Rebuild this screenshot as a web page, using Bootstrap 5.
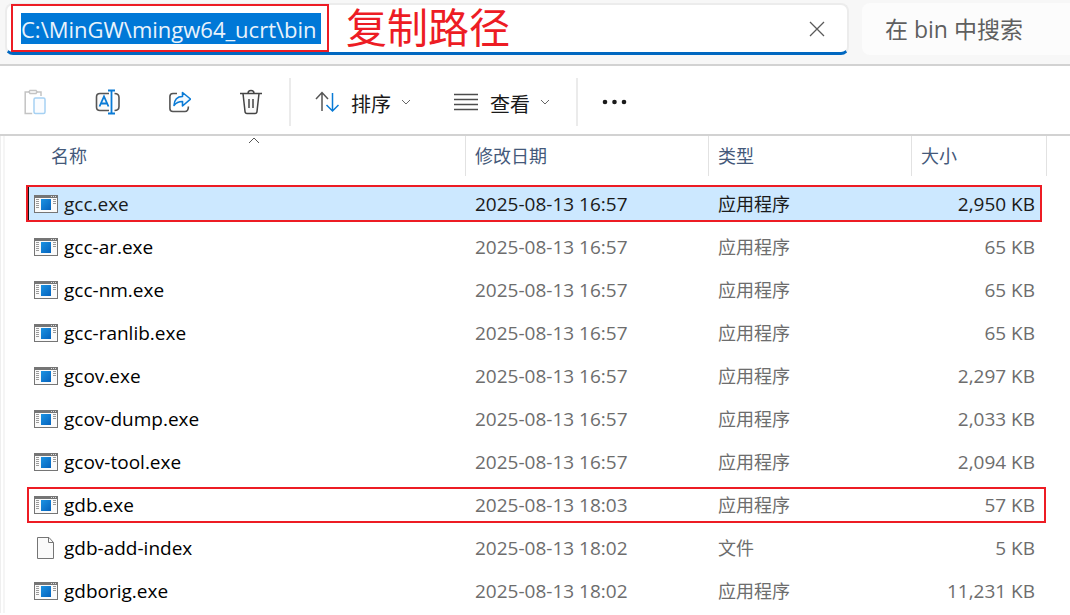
<!DOCTYPE html>
<html lang="zh-CN">
<head>
<meta charset="utf-8">
<meta name="viewport" content="width=device-width, initial-scale=1">
<title>bin</title>
<link href="https://cdn.jsdelivr.net/npm/bootstrap@5.3.0/dist/css/bootstrap.min.css" rel="stylesheet">
<style>
  :root { --note: #ed1c24; --line: #d2d2d2; --accent: #0067c0; }
  body { font-family: "Open Sans", "Noto Sans CJK SC", sans-serif; font-size: 20px; line-height: 24px; color: #000; background: #fff; }
  .top-strip { background: #f7f7f7; border-bottom: 2px solid var(--line); padding: 3px 0 9px 5px; gap: 13px; }
  .address { height: 52px; background: #fff; border: 2px solid #ececec; border-bottom: 3px solid var(--accent); border-radius: 8px; padding-right: 20px; }
  .path-note { border: 2px solid var(--note); padding: 7px 6px 7px 8px; margin-left: 4px; height: 48px; margin-top: -1px; }
  .path-input { width: 300px; height: 31px; border: 0; padding: 0; background: #0078d7; color: #e9f3fc; font-size: 22px; line-height: 30px; outline: 0; }
  .note-text { color: var(--note); font-size: 41px; line-height: 44px; margin-left: 17px; }
  .search-box { width: 208px; height: 52px; border: 0; border-radius: 8px 0 0 8px; background: #fcfcfc; color: #5c5c5c; padding: 0 0 0 23px; font-size: 23px; outline: 0; }
  .search-box::placeholder { color: #5f5f5f; opacity: 1; }
  .tools { height: 70px; border-bottom: 2px solid var(--line); padding: 4px 0 0 23px; }
  .tool { border: 0; background: none; padding: 0; color: #1a1a1a; line-height: 24px; }
  .tool svg, .close-btn svg { display: block; }
  .tool-set { gap: 48px; }
  .tool-label { margin: 6px 10px 0 12px; }
  .view-tool { margin-left: 43px; }
  .tool-rule { width: 2px; height: 48px; background: #ebebeb; margin: 0 24px 0 26px; }
  .files-pane { border-left: 1px solid #efefef; padding: 0 23px 0 2px; }
  .files-inner { border-left: 2px solid #f5f5f5; padding-left: 21px; }
  .files { table-layout: fixed; width: 100%; border-collapse: collapse; }
  .files th { padding: 0 0 7px; font-weight: 400; font-size: 18px; color: #44597a; }
  .head-cell { height: 40px; border-right: 1px solid #e2e2e2; padding-left: 9px; line-height: 40px; }
  .first-head { margin-left: 16px; }
  .sort-mark { position: absolute; top: 1px; left: 50%; transform: translateX(-50%); }
  .files tbody tr { position: relative; height: 43px; }
  .files td { padding: 0 0 2px 9px; font-size: 19px; color: #6d6d6d; white-space: nowrap; }
  .files td.name { color: #000; padding-left: 8px; }
  .files td.name > div { gap: 6px; }
  .files td.kind { font-size: 18px; }
  .files td.size { padding: 0 12px 2px 0; text-align: right; }
  .files tr.picked td { color: #1a1a1a; }
  .picked .name::before, .boxed .name::before { content: ""; position: absolute; z-index: -1; border: 2px solid var(--note); }
  .picked .name::before { inset: 2px 5px 4px 0; background: #cce8ff; box-shadow: inset 1px 0 #111; }
  .boxed .name::before { inset: 3px 1px 4px 1px; }
  .file-icon { width: 24px; flex: none; }
</style>
</head>
<body>
<svg class="d-none" aria-hidden="true">
  <symbol id="exe" viewBox="0 0 24 18">
    <rect width="24" height="18" fill="#757575"/>
    <path fill="#fafafa" d="M1 3h22v14H1z"/>
    <path stroke="#ddd" stroke-dasharray="1 1" d="M17 1.500h6"/>
    <rect x="7" y="4" width="10" height="11" fill="url(#blue)"/>
    <path stroke="#9a9a9a" d="M2 4.500h3M2 6.500h3M2 8.500h3M2 10.500h3M2 12.500h3M19 4.500h3M19 6.500h3M19 8.500h3"/>
  </symbol>
  <symbol id="doc" viewBox="0 0 24 22">
    <path d="M3.500.500h11.500l4.500 5v16h-16z" fill="#fafafa" stroke="#757575"/>
    <path d="M14.500.500v5h5" fill="none" stroke="#757575"/>
  </symbol>
  <symbol id="chev" viewBox="0 0 10 6"><path d="M1 1l4 4 4-4" fill="none" stroke="#666"/></symbol>
</svg>
<svg width="0" height="0" class="position-absolute" aria-hidden="true"><defs><linearGradient id="blue" x2="1" y2="1"><stop stop-color="#1c93e2"/><stop offset="1" stop-color="#0562bd"/></linearGradient></defs></svg>

<header class="top-strip d-flex">
  <div class="address d-flex align-items-start flex-grow-1">
    <div class="path-note d-flex"><input class="path-input" type="text" aria-label="路径" value="C:\MinGW\mingw64_ucrt\bin" spellcheck="false"></div>
    <span class="note-text text-nowrap">复制路径</span>
    <button class="tool close-btn ms-auto align-self-center" type="button" aria-label="清除">
      <svg width="20" height="20" viewBox="0 0 20 20"><path d="M3 3l14 14M17 3L3 17" stroke="#5a5a5a" stroke-width="1.300"/></svg>
    </button>
  </div>
  <input class="search-box" type="search" aria-label="搜索" placeholder="在 bin 中搜索">
</header>

<nav class="tools d-flex align-items-center" aria-label="工具栏">
  <div class="tool-set d-flex">
    <button class="tool" type="button" aria-label="粘贴" disabled>
      <svg width="24" height="26" viewBox="0 0 24 26" fill="none" stroke-width="1.500">
        <path d="M6 3H2.200v21.500h7M14 3h4v4" stroke="#c4c4c4"/><path d="M7 1.500h6l1 1.300-1 1.700H7L6 2.800z" fill="#fff" stroke="#c4c4c4"/>
        <rect x="11" y="9" width="11" height="15.500" rx="1.500" fill="#fafcff" stroke="#a6d1f3"/>
      </svg>
    </button>
    <button class="tool" type="button" aria-label="重命名">
      <svg width="26" height="26" viewBox="0 0 26 26" fill="none" stroke-width="1.600">
        <path d="M14 4.500H5Q1.500 4.500 1.500 8v10q0 3.500 3.500 3.500h9M19.500 4.500Q24 4.500 24 8.500v9q0 4-4.500 4" stroke="#555" fill="#fafafa"/>
        <path d="M4.500 17.500L9 7.500l4.500 10M6 14.500h6M13 1.500h7M16.500 1.500v23M13 24.500h7" stroke="#0a7bd6" stroke-width="1.800"/>
      </svg>
    </button>
    <button class="tool" type="button" aria-label="共享">
      <svg width="22" height="26" viewBox="0 0 22 26" fill="none" stroke-width="1.600" stroke-linejoin="round">
        <path d="M8 4.500H4Q.900 4.500.900 7.500v12q0 3 3 3h12q3.500 0 3.500-5" stroke="#555"/>
        <path d="M13.500 3.500v4Q5.500 7.500 5 16.500q3-4 8.500-4v4.500l8-7z" stroke="#0a7bd6" fill="#f2f9ff"/>
      </svg>
    </button>
    <button class="tool" type="button" aria-label="删除">
      <svg width="24" height="26" viewBox="0 0 24 26" fill="none" stroke="#444" stroke-width="1.500">
        <path d="M4 4.500l2 18q.2 2 2 2h8q1.800 0 2-2l2-18" fill="#fafafa"/><path d="M1 4.500h22M9 4.500q0-3 3-3t3 3M10 10v9M14 10v9"/>
      </svg>
    </button>
  </div>
  <div class="tool-rule"></div>
  <button class="tool d-flex align-items-center" type="button">
    <svg width="24" height="24" viewBox="0 0 24 24" fill="none" stroke-width="1.500"><path d="M7 21V3M1 9l6-6.500L13 9" stroke="#555"/><path d="M17.500 3v18M11.500 15l6 6 6-6" stroke="#0a7bd6"/></svg>
    <span class="tool-label">排序</span><svg width="10" height="6"><use href="#chev"/></svg>
  </button>
  <button class="tool view-tool d-flex align-items-center" type="button">
    <svg width="24" height="18" viewBox="0 0 24 18"><path d="M0 1.500h24M0 6.500h24M0 11.500h24M0 16.500h24" stroke="#4c4c4c" stroke-width="1.300"/></svg>
    <span class="tool-label">查看</span><svg width="10" height="6"><use href="#chev"/></svg>
  </button>
  <div class="tool-rule"></div>
  <button class="tool" type="button" aria-label="更多"><svg width="26" height="6" viewBox="0 0 26 6" fill="#1a1a1a"><circle cx="3" cy="3" r="2.300"/><circle cx="12.500" cy="3" r="2.300"/><circle cx="22" cy="3" r="2.300"/></svg></button>
</nav>

<main class="files-pane"><div class="files-inner">
  <table class="files">
    <colgroup><col><col style="width:243px"><col style="width:203px"><col style="width:135px"></colgroup>
    <thead><tr>
      <th scope="col"><div class="head-cell first-head position-relative">名称<svg class="sort-mark" width="12" height="7" viewBox="0 0 12 7"><path d="M1 6l5-5 5 5" fill="none" stroke="#555"/></svg></div></th>
      <th scope="col"><div class="head-cell">修改日期</div></th>
      <th scope="col"><div class="head-cell">类型</div></th>
      <th scope="col"><div class="head-cell">大小</div></th>
    </tr></thead>
    <tbody>
      <tr class="picked"><td class="name"><div class="d-flex align-items-center"><svg class="file-icon" height="18"><use href="#exe"/></svg><span>gcc.exe</span></div></td><td>2025-08-13 16:57</td><td class="kind">应用程序</td><td class="size">2,950 KB</td></tr>
      <tr><td class="name"><div class="d-flex align-items-center"><svg class="file-icon" height="18"><use href="#exe"/></svg><span>gcc-ar.exe</span></div></td><td>2025-08-13 16:57</td><td class="kind">应用程序</td><td class="size">65 KB</td></tr>
      <tr><td class="name"><div class="d-flex align-items-center"><svg class="file-icon" height="18"><use href="#exe"/></svg><span>gcc-nm.exe</span></div></td><td>2025-08-13 16:57</td><td class="kind">应用程序</td><td class="size">65 KB</td></tr>
      <tr><td class="name"><div class="d-flex align-items-center"><svg class="file-icon" height="18"><use href="#exe"/></svg><span>gcc-ranlib.exe</span></div></td><td>2025-08-13 16:57</td><td class="kind">应用程序</td><td class="size">65 KB</td></tr>
      <tr><td class="name"><div class="d-flex align-items-center"><svg class="file-icon" height="18"><use href="#exe"/></svg><span>gcov.exe</span></div></td><td>2025-08-13 16:57</td><td class="kind">应用程序</td><td class="size">2,297 KB</td></tr>
      <tr><td class="name"><div class="d-flex align-items-center"><svg class="file-icon" height="18"><use href="#exe"/></svg><span>gcov-dump.exe</span></div></td><td>2025-08-13 16:57</td><td class="kind">应用程序</td><td class="size">2,033 KB</td></tr>
      <tr><td class="name"><div class="d-flex align-items-center"><svg class="file-icon" height="18"><use href="#exe"/></svg><span>gcov-tool.exe</span></div></td><td>2025-08-13 16:57</td><td class="kind">应用程序</td><td class="size">2,094 KB</td></tr>
      <tr class="boxed"><td class="name"><div class="d-flex align-items-center"><svg class="file-icon" height="18"><use href="#exe"/></svg><span>gdb.exe</span></div></td><td>2025-08-13 18:03</td><td class="kind">应用程序</td><td class="size">57 KB</td></tr>
      <tr><td class="name"><div class="d-flex align-items-center"><svg class="file-icon" height="22"><use href="#doc"/></svg><span>gdb-add-index</span></div></td><td>2025-08-13 18:02</td><td class="kind">文件</td><td class="size">5 KB</td></tr>
      <tr><td class="name"><div class="d-flex align-items-center"><svg class="file-icon" height="18"><use href="#exe"/></svg><span>gdborig.exe</span></div></td><td>2025-08-13 18:02</td><td class="kind">应用程序</td><td class="size">11,231 KB</td></tr>
    </tbody>
  </table>
</div></main>
<script src="https://cdn.jsdelivr.net/npm/bootstrap@5.3.0/dist/js/bootstrap.bundle.min.js"></script>
</body>
</html>
